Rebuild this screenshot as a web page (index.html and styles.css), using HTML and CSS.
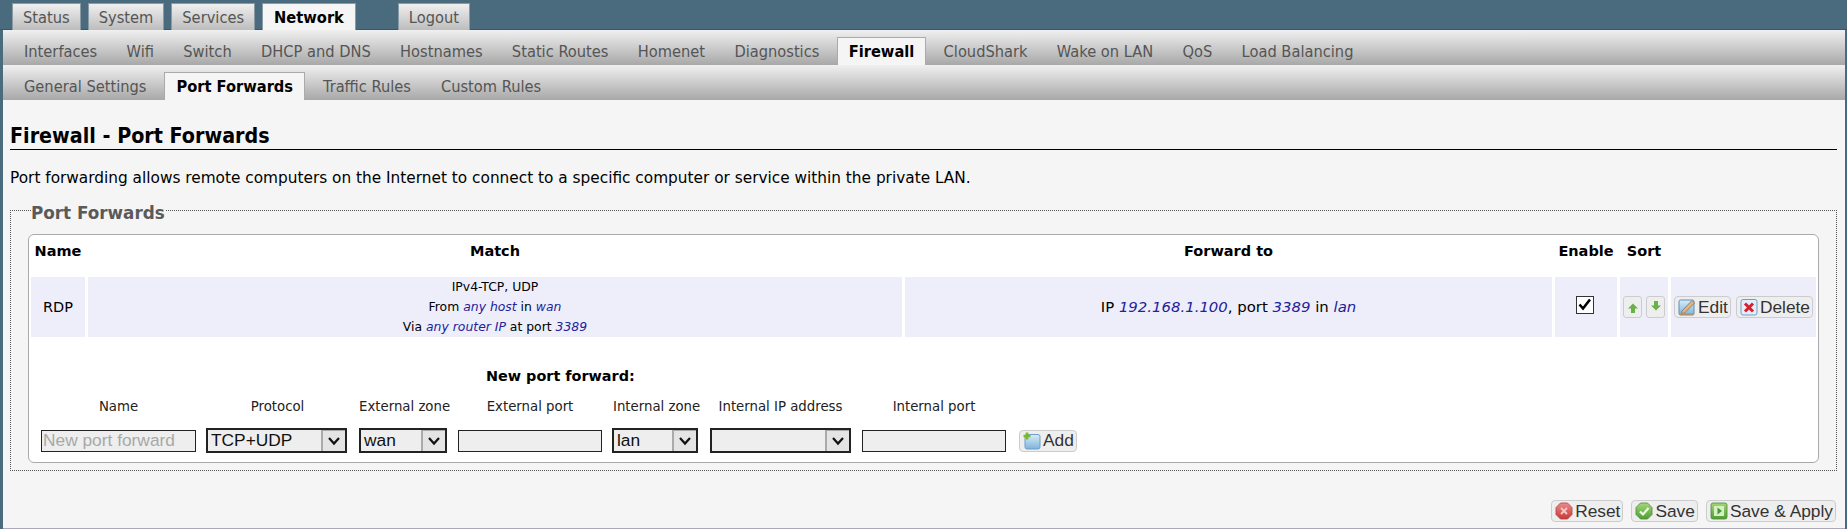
FILE: index.html
```html
<!DOCTYPE html>
<html lang="en">
<head>
<meta charset="utf-8">
<title>Firewall - Port Forwards</title>
<link rel="stylesheet" href="styles.css">
</head>
<body>
<svg class="defs" width="0" height="0" aria-hidden="true">
  <defs>
    <linearGradient id="gBlue" x1="0" y1="0" x2="0" y2="1"><stop offset="0" stop-color="#d8ecf8"/><stop offset="1" stop-color="#7db4dc"/></linearGradient>
    <linearGradient id="gRed" x1="0" y1="0" x2="0" y2="1"><stop offset="0" stop-color="#ec8a8a"/><stop offset="1" stop-color="#c83a3a"/></linearGradient>
    <linearGradient id="gGreen" x1="0" y1="0" x2="0" y2="1"><stop offset="0" stop-color="#a4d67c"/><stop offset="1" stop-color="#4f9e34"/></linearGradient>
  </defs>
</svg>
<nav class="main-menu">
  <a class="tab">Status</a>
  <a class="tab">System</a>
  <a class="tab">Services</a>
  <a class="tab active">Network</a>
  <a class="tab logout">Logout</a>
</nav>
<div class="page">
  <nav class="sub-menu">
    <a class="tab">Interfaces</a>
    <a class="tab">Wifi</a>
    <a class="tab">Switch</a>
    <a class="tab">DHCP and DNS</a>
    <a class="tab">Hostnames</a>
    <a class="tab">Static Routes</a>
    <a class="tab">Homenet</a>
    <a class="tab">Diagnostics</a>
    <a class="tab active">Firewall</a>
    <a class="tab">CloudShark</a>
    <a class="tab">Wake on LAN</a>
    <a class="tab">QoS</a>
    <a class="tab">Load Balancing</a>
  </nav>
  <nav class="sub-menu third">
    <a class="tab">General Settings</a>
    <a class="tab active">Port Forwards</a>
    <a class="tab">Traffic Rules</a>
    <a class="tab">Custom Rules</a>
  </nav>
  <main class="content">
    <h2 class="title">Firewall - Port Forwards</h2>
    <p class="desc">Port forwarding allows remote computers on the Internet to connect to a specific computer or service within the private LAN.</p>
    <fieldset class="section">
      <legend>Port Forwards</legend>
      <div class="box">
        <table class="rules">
          <thead>
            <tr>
              <th class="c-name">Name</th>
              <th class="c-match">Match</th>
              <th class="c-fwd">Forward to</th>
              <th class="c-en">Enable</th>
              <th class="c-sort">Sort</th>
              <th class="c-act"></th>
            </tr>
          </thead>
          <tbody>
            <tr>
              <td>RDP</td>
              <td class="small">IPv4-TCP, UDP<br>From <var>any host</var> in <var>wan</var><br>Via <var>any router IP</var> at port <var>3389</var></td>
              <td class="big">IP <var>192.168.1.100</var>, port <var>3389</var> in <var>lan</var></td>
              <td><span class="check"><svg viewBox="0 0 17 17" width="17" height="17"><path d="M3.5 8.5 L7 12.5 L14 3.5" fill="none" stroke="#000" stroke-width="2.6"/></svg></span></td>
              <td>
                <div class="sorts">
                  <button class="sort-btn" type="button"><svg viewBox="0 0 12 12" width="12" height="12"><path d="M6 2.5 L11 7.5 H8 V12 H4 V7.5 H1 Z" fill="#6cb04a"/></svg></button>
                  <button class="sort-btn" type="button"><svg viewBox="0 0 12 12" width="12" height="12"><path d="M6 9.5 L11 4.5 H8 V0 H4 V4.5 H1 Z" fill="#6cb04a"/></svg></button>
                </div>
              </td>
              <td>
                <div class="actions">
                  <button class="btn" type="button"><svg class="ico" viewBox="0 0 18 18" width="18" height="18"><rect x="1" y="2" width="15" height="15" rx="1.5" fill="url(#gBlue)" stroke="#5a8fb8"/><path d="M4 13 L14 2.5 L16.5 5 L6.5 15 L3.5 15.5 Z" fill="#e8b860" stroke="#7a6a90" stroke-width=".8"/><path d="M2 16 H16" stroke="#d88a30" stroke-width="1.2"/></svg>Edit</button>
                  <button class="btn" type="button"><svg class="ico" viewBox="0 0 18 18" width="18" height="18"><rect x="1" y="1.5" width="16" height="15.5" rx="2" fill="#e4eef8" stroke="#6f9fc8"/><path d="M5 5.5 L13 13.5 M13 5.5 L5 13.5" stroke="#d8202c" stroke-width="3"/></svg>Delete</button>
                </div>
              </td>
            </tr>
          </tbody>
        </table>
        <h4 class="new-title">New port forward:</h4>
        <div class="new-form">
          <label>Name</label>
          <label>Protocol</label>
          <label>External zone</label>
          <label>External port</label>
          <label>Internal zone</label>
          <label>Internal IP address</label>
          <label>Internal port</label>
          <span></span>
          <input class="field" type="text" placeholder="New port forward">
          <span class="sel shift-l">TCP+UDP<i class="arrow"><svg viewBox="0 0 14 10" width="14" height="10"><path d="M2 2 L7 7.5 L12 2" fill="none" stroke="#111" stroke-width="2.2"/></svg></i></span>
          <span class="sel">wan<i class="arrow"><svg viewBox="0 0 14 10" width="14" height="10"><path d="M2 2 L7 7.5 L12 2" fill="none" stroke="#111" stroke-width="2.2"/></svg></i></span>
          <input class="field" type="text">
          <span class="sel shift-l">lan<i class="arrow"><svg viewBox="0 0 14 10" width="14" height="10"><path d="M2 2 L7 7.5 L12 2" fill="none" stroke="#111" stroke-width="2.2"/></svg></i></span>
          <span class="sel"><i class="arrow"><svg viewBox="0 0 14 10" width="14" height="10"><path d="M2 2 L7 7.5 L12 2" fill="none" stroke="#111" stroke-width="2.2"/></svg></i></span>
          <input class="field" type="text">
          <button class="btn add" type="button"><svg class="ico" viewBox="0 0 18 18" width="18" height="18"><rect x="2" y="2.5" width="15" height="14.5" rx="2" fill="url(#gBlue)" stroke="#6f9fc8"/><path d="M4 0.5 V7.5 M0.5 4 H7.5" stroke="#7ab828" stroke-width="2.6"/></svg>Add</button>
        </div>
      </div>
    </fieldset>
    <div class="footer-actions">
      <button class="btn" type="button"><svg class="ico" viewBox="0 0 18 18" width="18" height="18"><path d="M5.5 1 H12.5 L17 5.5 V12.5 L12.5 17 H5.5 L1 12.5 V5.5 Z" fill="url(#gRed)" stroke="#b04040" stroke-width=".8"/><path d="M6 6 L12 12 M12 6 L6 12" stroke="#f6c8c8" stroke-width="1.8"/></svg>Reset</button>
      <button class="btn" type="button"><svg class="ico" viewBox="0 0 18 18" width="18" height="18"><path d="M5.5 1 H12.5 L17 5.5 V12.5 L12.5 17 H5.5 L1 12.5 V5.5 Z" fill="url(#gGreen)" stroke="#4c8a30" stroke-width=".8"/><path d="M5 9.5 L8 12.5 L13.5 6" fill="none" stroke="#eef8e4" stroke-width="2.2"/></svg>Save</button>
      <button class="btn" type="button"><svg class="ico" viewBox="0 0 18 18" width="18" height="18"><rect x="1" y="1" width="16" height="16" rx="2" fill="url(#gGreen)" stroke="#4c8a30" stroke-width=".8"/><rect x="4" y="4" width="10" height="10" fill="#d8efc4"/><path d="M7.5 5.5 L12 9 L7.5 12.5 Z" fill="#3f9a30"/></svg>Save &amp; Apply</button>
    </div>
  </main>
</div>
</body>
</html>
```

FILE: styles.css
```css
* { box-sizing: border-box; }
html, body { margin: 0; padding: 0; }
body {
  width: 1847px;
  height: 529px;
  overflow: hidden;
  background: #4a6b7e;
  font-family: "DejaVu Sans", Verdana, sans-serif;
  color: #000;
}
.defs { position: absolute; }

.main-menu {
  display: flex;
  gap: 7px;
  height: 30px;
  padding: 3px 0 0 12px;
  border-bottom: 1px solid #3e5563;
}
.tab {
  display: flex;
  align-items: center;
  padding: 0 11px;
  font-family: "DejaVu Sans Condensed", "DejaVu Sans", sans-serif;
  font-size: 16.3px;
  color: #555;
  white-space: nowrap;
}
.main-menu .tab {
  height: 27px;
  padding: 0 10px;
  background: linear-gradient(#efefef, #bdbdbd);
  border: 1px solid #8a9aa4;
  border-bottom: 0;
}
.main-menu .tab.active {
  color: #000;
  font-weight: bold;
  background: #f5f5f5;
  padding: 0 11px;
}
.main-menu .logout { margin-left: 35px; }

.page {
  height: 499px;
  margin: 0 2px 0 3px;
  background: #f5f5f5;
  border-bottom: 1px solid #aab;
  position: relative;
}
.sub-menu {
  display: flex;
  align-items: flex-end;
  gap: 5.3px;
  height: 35px;
  padding-left: 9px;
  background: linear-gradient(#f0f0f0, #a8a8a8);
}
.sub-menu.third { gap: 6px; }
.sub-menu .tab {
  height: 28px;
  padding: 0 11px;
  border: 1px solid transparent;
  border-bottom: 0;
}
.sub-menu .tab.active {
  color: #000;
  font-weight: bold;
  background: #f5f5f5;
  border-color: #aaa;
}

.content { padding: 0 8px 0 7px; }
.title {
  margin: 0;
  height: 50px;
  padding-top: 22px;
  font-family: "DejaVu Sans Condensed", "DejaVu Sans", sans-serif;
  font-size: 21.3px;
  line-height: 27px;
  font-weight: bold;
  border-bottom: 1px solid #000;
}
.desc {
  margin: 0;
  padding-top: 20px;
  font-size: 15.33px;
  line-height: 17px;
}

.section {
  margin: 0;
  margin-top: 16px;
  height: 268px;
  padding: 17px 17px 0 17px;
  border: 1px dotted #555;
  min-width: 0;
}
.section legend {
  margin-left: 3px;
  padding: 6px 0 0;
  font-size: 16.8px;
  font-weight: bold;
  line-height: 8px;
  color: #5a5a5a;
}
.box {
  height: 229px;
  background: #fff;
  border: 1px solid #aaa;
  border-radius: 6px;
  padding: 0;
}
.rules {
  width: 1791px;
  table-layout: fixed;
  border-collapse: separate;
  border-spacing: 3px 0;
  margin: 0 0 0 -1px;
  font-size: 14.5px;
}
.rules th {
  height: 42px;
  padding: 0 0 10px;
  font-size: 14.5px;
  text-align: center;
}
.c-name { width: 54px; }
.c-match { width: 814px; }
.c-fwd { width: 647px; }
.c-en { width: 62px; }
.c-sort { width: 48px; }
.c-act { width: 145px; }
.rules td {
  height: 60px;
  padding: 0;
  background: #eeeefb;
  text-align: center;
  vertical-align: middle;
  line-height: 20px;
}
.rules td.small { font-size: 12.4px; }
.rules td.big { font-size: 14.9px; }
var { font-style: italic; color: #22229c; }
.check {
  display: inline-block;
  width: 18px;
  height: 18px;
  margin: 0 3px 4px 0;
  vertical-align: middle;
  background: #fff;
  border: 1px solid #333;
  line-height: 0;
}
.check svg { display: block; margin: -1px 0 0 -1px; }
.sorts { display: flex; justify-content: center; gap: 4px; }
.sort-btn {
  width: 19px;
  height: 22px;
  padding: 0;
  display: flex;
  align-items: center;
  justify-content: center;
  background: #eee;
  border: 1px solid #ccc;
  border-radius: 3px;
}
.actions { display: flex; justify-content: center; gap: 5px; }
.btn {
  display: inline-flex;
  align-items: center;
  gap: 2px;
  height: 22px;
  padding: 0 2px 0 3px;
  font-family: "Liberation Sans", Arial, sans-serif;
  font-size: 17.33px;
  color: #333;
  background: #eee;
  border: 1px solid #ccc;
  border-radius: 4px;
  white-space: nowrap;
}
.ico { flex: none; }

.new-title {
  margin: 0;
  padding-top: 30px;
  height: 51px;
  padding-left: 457px;
  font-size: 14.4px;
  line-height: 18px;
}
.new-form {
  display: grid;
  grid-template-columns: 155px 141px 88px 144px 86px 141px 144px 57px;
  column-gap: 11px;
  margin-left: 12px;
  align-items: center;
}
.new-form label {
  height: 40px;
  padding-top: 10px;
  font-size: 13.3px;
  line-height: 18px;
  text-align: center;
  color: #222;
  white-space: nowrap;
}
.field {
  height: 22px;
  width: 100%;
  padding: 0 1px;
  background: #eee;
  border: 1px solid #222;
  font-family: "Liberation Sans", Arial, sans-serif;
  font-size: 17.33px;
}
.field::placeholder { color: #a8a8a8; opacity: 1; }
.sel {
  display: flex;
  align-items: center;
  justify-content: space-between;
  height: 25px;
  padding: 0 0 0 3px;
  background: #eee;
  border: 2px solid #222;
  font-family: "Liberation Sans", Arial, sans-serif;
  font-size: 17.33px;
  color: #111;
}
.shift-l { margin-left: -1px; margin-right: 1px; }
.arrow {
  display: flex;
  align-items: center;
  justify-content: center;
  width: 24px;
  height: 21px;
  margin-left: auto;
  background: #e4e4e4;
  border-left: 2px solid #aaa;
  border-top: 1px solid #aaa;
}
.add { margin-left: 2px; justify-self: start; }

.footer-actions {
  display: flex;
  justify-content: flex-end;
  gap: 8px;
  margin-top: 29px;
  padding-right: 1px;
}
```
